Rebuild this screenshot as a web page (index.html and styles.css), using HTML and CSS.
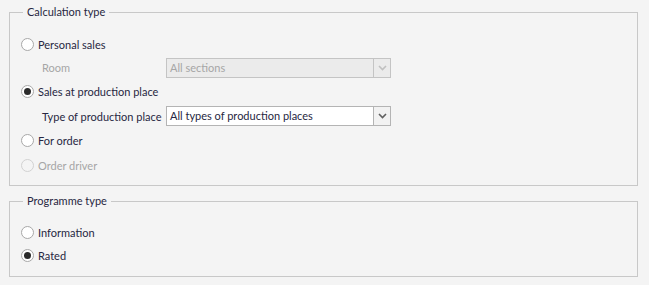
FILE: index.html
```html
<!DOCTYPE html>
<html lang="en">
<head>
    <meta charset="UTF-8">
    <title>Calculation settings</title>
    <link rel="stylesheet" href="styles.css">
</head>
<body>

    <fieldset class="group calc">
        <legend>Calculation type</legend>

        <label class="row radio">
            <span class="dot"></span> Personal sales
        </label>
        <div class="row sub disabled">
            <span class="caption">Room</span>
            <div class="combo">
                <span class="value">All sections</span>
                <span class="arrow"><svg width="9" height="6" viewBox="0 0 9 6"><path d="M1 1l3.5 3.5L8 1" fill="none" stroke="currentColor" stroke-width="1.6"/></svg></span>
            </div>
        </div>

        <label class="row radio tall">
            <span class="dot checked"></span> Sales at production place
        </label>
        <div class="row sub">
            <span class="caption">Type of production place</span>
            <div class="combo">
                <span class="value">All types of production places</span>
                <span class="arrow"><svg width="9" height="6" viewBox="0 0 9 6"><path d="M1 1l3.5 3.5L8 1" fill="none" stroke="currentColor" stroke-width="1.6"/></svg></span>
            </div>
        </div>

        <label class="row radio tall">
            <span class="dot"></span> For order
        </label>
        <label class="row radio disabled">
            <span class="dot"></span> Order driver
        </label>
    </fieldset>

    <fieldset class="group prog">
        <legend>Programme type</legend>
        <label class="row radio">
            <span class="dot"></span> Information
        </label>
        <label class="row radio">
            <span class="dot checked"></span> Rated
        </label>
    </fieldset>

</body>
</html>
```

FILE: styles.css
```css
/* General */
html, body {
    margin: 0;
    padding: 0;
    background-color: #f4f4f4;
}

body {
    padding: 4px 11px 0 9px;
    font-family: Lato, "Open Sans", sans-serif;
    font-size: 11px;
    color: #272742;
}

/* Group boxes */
.group {
    margin: 0;
    border: 1px solid #c8c8c8;
    padding: 12px 11px 8px 11px;
}

.group legend {
    margin-left: 2px;
    padding: 0 4px;
    line-height: 16px;
    height: 16px;
}

.prog {
    margin-top: 7px;
    padding-top: 12px;
    padding-bottom: 9px;
}

/* Rows */
.row {
    display: flex;
    align-items: center;
    height: 24px;
    white-space: nowrap;
}

.row.tall {
    height: 25px;
}

.calc .sub.disabled {
    height: 23px;
}

.prog .row {
    height: 23px;
}

.radio {
    gap: 4px;
}

.dot {
    flex-shrink: 0;
    box-sizing: border-box;
    width: 13px;
    height: 13px;
    border: 1px solid #a8a8a8;
    border-radius: 50%;
    background-color: #fff;
    display: flex;
    align-items: center;
    justify-content: center;
}

.dot.checked::after {
    content: "";
    width: 7px;
    height: 7px;
    border-radius: 50%;
    background-color: #2b2b2b;
}

.disabled {
    color: #a6a6a6;
}

.disabled .dot {
    border-color: #d2d2d2;
    background-color: #f4f4f4;
}

/* Sub options with combo */
.sub {
    padding-left: 21px;
}

.caption {
    flex-shrink: 0;
    width: 124px;
}

.combo {
    flex-shrink: 0;
    box-sizing: border-box;
    width: 225px;
    height: 20px;
    border: 1px solid #b4b4b4;
    background-color: #fff;
    display: flex;
    align-items: stretch;
}

.combo .value {
    flex: 1;
    padding-left: 3px;
    line-height: 18px;
}

.combo .arrow {
    width: 16px;
    border-left: 1px solid #b4b4b4;
    background-color: #f2f2f2;
    color: #606060;
    display: flex;
    align-items: center;
    justify-content: center;
}

.sub.disabled .combo {
    background-color: #ebebeb;
    border-color: #c4c4c4;
}

.sub.disabled .arrow {
    border-left-color: #c4c4c4;
    background-color: #ebebeb;
    color: #c0c0c0;
}
```
